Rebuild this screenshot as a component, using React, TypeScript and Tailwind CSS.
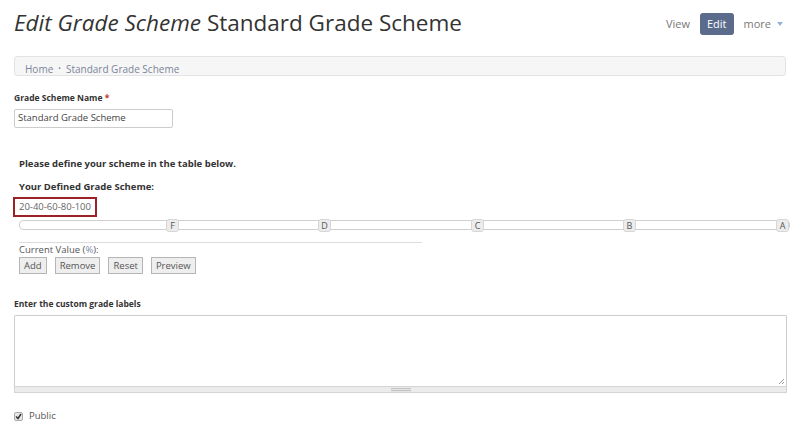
import React from "react";

const HANDLES = [
  { label: "F", left: 166 },
  { label: "D", left: 318 },
  { label: "C", left: 471 },
  { label: "B", left: 623 },
  { label: "A", left: 776 },
];

const BUTTONS = ["Add", "Remove", "Reset", "Preview"];

export default function App() {
  return (
    <div
      className="relative w-[800px] h-[430px] overflow-hidden bg-white text-[#333]"
      style={{ fontFamily: '"Open Sans", "Liberation Sans", sans-serif' }}
    >
      {/* header */}
      <div className="flex items-start justify-between pl-[14px] pr-[17px] pt-[6px]">
        <h1 className="text-[22.5px] leading-[34px] text-[#333]">
          <i>Edit Grade Scheme</i> Standard Grade Scheme
        </h1>
        <div className="flex items-center gap-[10px] mt-[7px] text-[11px]">
          <span className="text-[#777]">View</span>
          <span className="h-[22px] px-[7px] rounded-[3px] bg-[#5b6b8c] text-white flex items-center">Edit</span>
          <span className="text-[#777] flex items-center gap-[6px]">
            more
            <svg width="6" height="4" viewBox="0 0 6 4">
              <path d="M0 0h6L3 4z" fill="#8fb3d9" />
            </svg>
          </span>
        </div>
      </div>

      {/* breadcrumb */}
      <div className="mx-[14px] mt-[16px] h-[20px] w-[772px] rounded-[3px] border border-[#e3e3e3] bg-[#f6f6f6] pl-[10px] flex items-center pt-[6px] text-[10px] text-[#7a8599]">
        <span>Home</span>
        <span className="mx-[5px] text-[7px] leading-[10px]">•</span>
        <span>Standard Grade Scheme</span>
      </div>

      {/* name field */}
      <div className="pl-[14px] mt-[16px]">
        <div className="text-[8.5px] font-bold leading-[12px]">
          Grade Scheme Name <span className="text-[#c0392b]">*</span>
        </div>
        <div className="mt-[5px] w-[159px] h-[19px] border border-[#ccc] rounded-[2px] pl-[3px] flex items-center text-[9.5px] text-[#444]">
          Standard Grade Scheme
        </div>
      </div>

      <div className="pl-[19px] mt-[29px] text-[9.5px] font-bold leading-[14px] text-[#333]">
        Please define your scheme in the table below.
      </div>
      <div className="pl-[19px] mt-[9px] text-[9.5px] font-bold leading-[14px] text-[#333]">
        Your Defined Grade Scheme:
      </div>

      <div className="ml-[13px] mt-[3px] w-[84px] h-[20px] border-2 border-[#9b2226] flex items-center pl-[4px] text-[9.5px] text-[#666]">
        20-40-60-80-100
      </div>

      {/* slider */}
      <div className="relative ml-[19px] mt-[3px] w-[771px] h-[10px] border border-[#cfcfcf] rounded-[4px] bg-white">
        {HANDLES.map((h) => (
          <div
            key={h.label}
            className="absolute top-[-2px] w-[13px] h-[13px] rounded-[3px] border border-[#d6d6d6] bg-[#ececec] text-[9px] leading-[11px] text-center text-[#555]"
            style={{ left: h.left - 20 }}
          >
            {h.label}
          </div>
        ))}
      </div>

      <div className="ml-[19px] mt-[12px] w-[403px] border-t border-[#dcdcdc]" />

      <div className="pl-[19px] text-[9.5px] leading-[13px] text-[#555]">
        Current Value (<span className="text-[#7e8aa6]">%</span>):
      </div>
      <div className="pl-[19px] mt-[1px] flex gap-[7px]">
        {BUTTONS.map((b) => (
          <div
            key={b}
            className="h-[17px] px-[4px] border border-[#b5b5b5] bg-[#eeeeee] text-[9.5px] leading-[15px] text-[#555] mr-[1px]"
          >
            {b}
          </div>
        ))}
      </div>

      <div className="pl-[14px] mt-[24px] text-[8.5px] font-bold leading-[12px]">
        Enter the custom grade labels
      </div>

      {/* textarea */}
      <div className="ml-[14px] mt-[5px] w-[773px]">
        <div className="relative h-[71px] border border-[#ccc] border-b-0 rounded-t-[2px] bg-white">
          <svg className="absolute right-[1px] bottom-[1px]" width="7" height="7" viewBox="0 0 7 7">
            <path d="M6 1L1 6M6 4L4 6" stroke="#999" strokeWidth="1" />
          </svg>
        </div>
        <div className="h-[7px] border border-[#d4d4d4] bg-[#ececec] flex justify-center items-center">
          <div className="w-[20px] h-[4px] bg-[repeating-linear-gradient(to_bottom,#c4c4c4_0px,#c4c4c4_1px,#e4e4e4_1px,#e4e4e4_2px)]" />
        </div>
      </div>

      <div className="pl-[14px] mt-[16px] flex items-center gap-[6px] text-[9.5px] text-[#555]">
        <span className="w-[9px] h-[9px] rounded-[2px] border border-[#aaa] bg-[#e8e8e8] flex items-center justify-center">
          <svg width="7" height="7" viewBox="0 0 7 7">
            <path d="M1 3.5L3 5.5L6 1" stroke="#333" strokeWidth="1.5" fill="none" />
          </svg>
        </span>
        Public
      </div>
    </div>
  );
}
